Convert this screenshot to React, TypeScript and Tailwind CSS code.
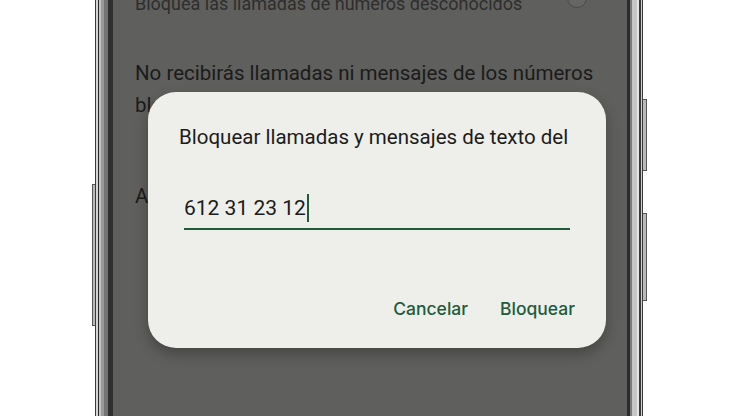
import React from "react";

const font = { fontFamily: "Roboto, 'Noto Sans', sans-serif" };

const Dialog = () => {
  return (
    <div className="absolute left-[35px] top-[92px] flex h-[256px] w-[458px] flex-col rounded-[28px] bg-[#eeefea] shadow-[0_6px_14px_rgba(0,0,0,0.28)]">
      <p className="pl-[31px] pt-[33px] text-[20.5px] leading-[24px] text-[#1c1c1a]">
        Bloquear llamadas y mensajes de texto del
      </p>
      <div className="ml-[36px] mr-[36px] mt-[45px] flex items-center border-b-2 border-[#1f5b39] pb-[6px]">
        <span className="text-[21px] leading-[26px] text-[#1b1b1b]">612 31 23 12</span>
        <span className="ml-[1px] h-[28px] w-[2px] bg-[#1f5b39]" />
      </div>
      <div className="mt-auto flex justify-end gap-[32px] pb-[26px] pr-[31px]" style={{ fontFamily: "Inter, Roboto, sans-serif" }}>
        <button className="text-[17.5px] font-medium text-[#215b3a]">Cancelar</button>
        <button className="text-[17.5px] font-medium text-[#215b3a]">Bloquear</button>
      </div>
    </div>
  );
};

const App = () => {
  return (
    <div className="flex h-[416px] w-[740px] overflow-hidden bg-white" style={font}>
      {/* left side button */}
      <div className="flex w-[95px] justify-end">
        <div className="mt-[184px] h-[142px] w-[3px] rounded-l-[1px] border border-r-0 border-[#555] bg-[#b9b9b9]" />
      </div>
      {/* left bezel */}
      <div className="w-[18px] bg-[linear-gradient(90deg,#3a3a3a_0_1px,#d4d4d4_1px_3px,#2a2a2a_3px_4px,#c4c4c4_4px_6px,#9a9a9a_6px_9px,#747474_9px_13px,#2f2f2f_13px_18px)]" />
      {/* screen */}
      <div className="relative w-[514px] bg-[#5f5f5d] px-[22px]">
        <div className="absolute left-[454px] top-[-12px] h-[20px] w-[20px] rounded-full border border-[#4a4a48] bg-[#666664]" />
        <p className="-mt-[8px] text-[18px] leading-[24px] text-[#2e2e2d]">
          Bloquea las llamadas de números desconocidos
        </p>
        <p className="mt-[41px] text-[20.5px] leading-[32px] text-[#1b1b1a]">
          No recibirás llamadas ni mensajes de los números bloqueados
        </p>
        <p className="mt-[59px] text-[20.5px] leading-[32px] text-[#1b1b1a]">Añadir un número</p>
        <Dialog />
      </div>
      {/* right bezel */}
      <div className="w-[16px] bg-[linear-gradient(90deg,#2c2c2c_0_3px,#7c7c7c_3px_5px,#c6c6c6_5px_10px,#e4e4e4_10px_12px,#3a3a3a_12px_14px,#d0d0d0_14px_15px,#3a3a3a_15px_16px)]" />
      {/* right side buttons */}
      <div className="flex w-[4px] flex-col">
        <div className="mt-[99px] h-[72px] w-[4px] border border-l-0 border-[#555] bg-[#b9b9b9]" />
        <div className="mt-[42px] h-[88px] w-[4px] border border-l-0 border-[#555] bg-[#b9b9b9]" />
      </div>
      <div className="flex-1" />
    </div>
  );
};

export default App;
